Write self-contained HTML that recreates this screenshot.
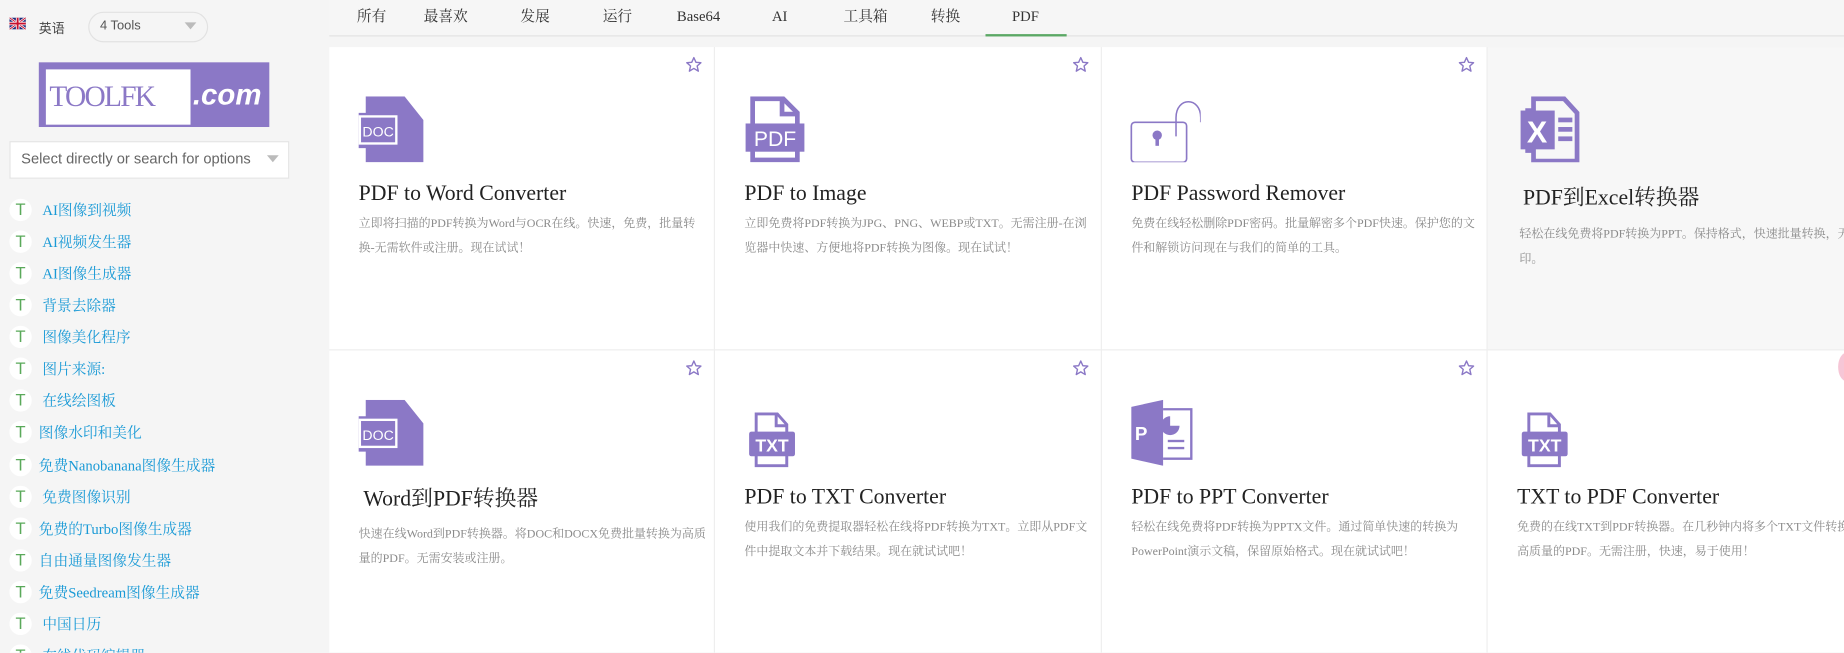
<!DOCTYPE html>
<html><head><meta charset="utf-8"><style>
html,body{margin:0;padding:0;width:1844px;height:653px;overflow:hidden;background:#f5f5f5}
#w{position:absolute;left:0;top:0;width:1568px;height:555px;transform:scale(1.17602);transform-origin:0 0;font-family:"Liberation Sans","Noto Sans CJK SC",sans-serif;background:#f5f5f5;overflow:hidden}
.a{position:absolute}
.li{position:absolute;left:8px;height:20px;font-size:12.5px;color:#1a9ad6;font-family:"Liberation Serif","Noto Serif CJK SC",serif;line-height:20px}
.li .t{position:absolute;left:0;top:0;width:19px;height:19px;border-radius:50%;background:#fff;color:#5aa95a;font-size:14px;text-align:center;line-height:19px;font-family:"Liberation Sans",sans-serif}
.li span.x{position:absolute;left:28px;white-space:nowrap}
.tab{position:absolute;top:4px;height:20px;line-height:20px;font-size:12.5px;color:#333;font-family:"Liberation Serif","Noto Serif CJK SC",serif;transform:translateX(-50%);white-space:nowrap}
.card{position:absolute;background:#fff;width:327px;height:257px}
.card .st{position:absolute;right:10px;top:8px}
.card .ic{position:absolute;left:24px;top:42px;width:60px;height:56px}
.card h3{position:absolute;left:25px;top:114px;margin:0;font-weight:normal;font-size:18.5px;line-height:22px;color:#222;font-family:"Liberation Serif","Noto Serif CJK SC",serif;white-space:nowrap}
.card p{position:absolute;left:25px;top:141px;margin:0;width:296px;font-size:10.2px;line-height:20.5px;color:#8a8a8a;font-family:"Liberation Serif","Noto Serif CJK SC",serif}
</style></head><body><div id="w">
<svg class="a" style="left:8px;top:15px" width="14" height="10" viewBox="0 0 14 10"><rect width="14" height="10" fill="#1d2b7a"/><path d="M0 0L14 10M14 0L0 10" stroke="#fff" stroke-width="2"/><path d="M0 0L14 10M14 0L0 10" stroke="#c8102e" stroke-width=".8"/><path d="M7 0V10M0 5H14" stroke="#fff" stroke-width="3"/><path d="M7 0V10M0 5H14" stroke="#c8102e" stroke-width="1.6"/></svg>
<div class="a" style="left:33px;top:16px;font-size:11px;color:#444">英语</div>
<div class="a" style="left:75px;top:10px;width:100px;height:24px;border:1px solid #e2e2e2;border-radius:13px;background:#f5f5f5"></div>
<div class="a" style="left:85px;top:16px;font-size:11px;color:#555">4 Tools</div>
<div class="a" style="left:157px;top:19px;width:0;height:0;border-left:5px solid transparent;border-right:5px solid transparent;border-top:6px solid #bbb"></div>
<div class="a" style="left:33px;top:53px;width:196px;height:55px;background:#8b78c6"></div>
<div class="a" style="left:39px;top:59px;width:123px;height:47px;background:#fff"></div>
<div class="a" style="left:42px;top:68px;font-family:'Liberation Serif',serif;font-size:25px;line-height:30px;color:#8b78c6;letter-spacing:-1.5px">TOOLFK</div>
<div class="a" style="left:164px;top:66px;font-family:'Liberation Sans',sans-serif;font-weight:bold;font-style:italic;font-size:25px;line-height:30px;color:#fff">.com</div>
<div class="a" style="left:8px;top:120px;width:236px;height:30px;background:#fff;border:1px solid #e4e4e4"></div>
<div class="a" style="left:18px;top:128px;font-size:12.5px;color:#666">Select directly or search for options</div>
<div class="a" style="left:227px;top:132px;width:0;height:0;border-left:5px solid transparent;border-right:5px solid transparent;border-top:6px solid #bbb"></div>
<div class="li" style="top:169px"><span class="t">T</span><span class="x">AI图像到视频</span></div>
<div class="li" style="top:196px"><span class="t">T</span><span class="x">AI视频发生器</span></div>
<div class="li" style="top:223px"><span class="t">T</span><span class="x">AI图像生成器</span></div>
<div class="li" style="top:250px"><span class="t">T</span><span class="x">背景去除器</span></div>
<div class="li" style="top:277px"><span class="t">T</span><span class="x">图像美化程序</span></div>
<div class="li" style="top:304px"><span class="t">T</span><span class="x">图片来源:</span></div>
<div class="li" style="top:331px"><span class="t">T</span><span class="x">在线绘图板</span></div>
<div class="li" style="top:358px"><span class="t">T</span><span class="x" style="left:25px">图像水印和美化</span></div>
<div class="li" style="top:386px"><span class="t">T</span><span class="x" style="left:25px">免费Nanobanana图像生成器</span></div>
<div class="li" style="top:413px"><span class="t">T</span><span class="x">免费图像识别</span></div>
<div class="li" style="top:440px"><span class="t">T</span><span class="x" style="left:25px">免费的Turbo图像生成器</span></div>
<div class="li" style="top:467px"><span class="t">T</span><span class="x" style="left:25px">自由通量图像发生器</span></div>
<div class="li" style="top:494px"><span class="t">T</span><span class="x" style="left:25px">免费Seedream图像生成器</span></div>
<div class="li" style="top:521px"><span class="t">T</span><span class="x">中国日历</span></div>
<div class="li" style="top:548px"><span class="t">T</span><span class="x">在线代码编辑器</span></div>
<div class="a" style="left:280px;top:0;width:1288px;height:30px;border-bottom:1px solid #e2e2e2;background:#f6f6f6"></div>
<div class="tab" style="left:316px">所有</div>
<div class="tab" style="left:379px">最喜欢</div>
<div class="tab" style="left:455px">发展</div>
<div class="tab" style="left:525px">运行</div>
<div class="tab" style="left:594px">Base64</div>
<div class="tab" style="left:663px">AI</div>
<div class="tab" style="left:736px">工具箱</div>
<div class="tab" style="left:804px">转换</div>
<div class="tab" style="left:872px">PDF</div>
<div class="a" style="left:838px;top:29px;width:69px;height:2px;background:#5ba865"></div>
<div class="a" style="left:280px;top:40px;width:1288px;height:515px;background:#eeeeee"></div>
<svg width="0" height="0" style="position:absolute"><defs><g id="star"><path d="M7 1L8.8 5 13 5.3 9.8 8.1 10.8 12.5 7 10.2 3.2 12.5 4.2 8.1 1 5.3 5.2 5Z" fill="none" stroke="#8b78c6" stroke-width="1.2" stroke-linejoin="round"/></g></defs></svg>

<div class="card" style="left:280px;top:40px"><svg class="st" width="14" height="14"><use href="#star"/></svg>
<svg class="ic" viewBox="0 0 60 56"><path d="M7 0H40L56 20V56H7V44H1V14H7Z" fill="#8b78c6"/><rect x="1" y="16" width="33" height="25" fill="#fff"/><rect x="3" y="18" width="29" height="21" fill="#8b78c6"/><text x="17.5" y="34" font-family="Liberation Sans" font-size="12" fill="#fff" text-anchor="middle">DOC</text></svg>
<h3>PDF to Word Converter</h3><p>立即将扫描的PDF转换为Word与OCR在线。快速，免费，批量转换-无需软件或注册。现在试试！</p></div>

<div class="card" style="left:608px;top:40px;width:328px"><svg class="st" width="14" height="14"><use href="#star"/></svg>
<svg class="ic" viewBox="0 0 60 56"><path d="M8 2H34L46 14V54H8Z" fill="none" stroke="#8b78c6" stroke-width="4"/><path d="M33 2V15H46" fill="none" stroke="#8b78c6" stroke-width="4"/><rect x="2" y="23" width="50" height="24" fill="#8b78c6"/><text x="27" y="42" font-family="Liberation Sans" font-size="18" fill="#fff" text-anchor="middle">PDF</text></svg>
<h3>PDF to Image</h3><p>立即免费将PDF转换为JPG、PNG、WEBP或TXT。无需注册-在浏览器中快速、方便地将PDF转换为图像。现在试试！</p></div>

<div class="card" style="left:937px;top:40px"><svg class="st" width="14" height="14"><use href="#star"/></svg>
<svg class="ic" viewBox="0 0 60 56"><path d="M39 34V18C39 0 60 0 60 18V22" fill="none" stroke="#8b78c6" stroke-width="1.3"/><rect x="1" y="22" width="47" height="34" rx="3" fill="none" stroke="#8b78c6" stroke-width="1.4"/><circle cx="23" cy="33" r="4" fill="#8b78c6"/><rect x="21.5" y="33" width="3" height="9" fill="#8b78c6"/></svg>
<h3>PDF Password Remover</h3><p>免费在线轻松删除PDF密码。批量解密多个PDF快速。保护您的文件和解锁访问现在与我们的简单的工具。</p></div>

<div class="card" style="left:1265px;top:40px;width:303px;background:#f7f7f7"><svg class="ic" style="top:42px;left:26px" viewBox="0 0 60 56"><path d="M13 2H39L50 14V55H13V46H8V12H13Z" fill="none" stroke="#8b78c6" stroke-width="4"/><rect x="2" y="12" width="29" height="33" fill="#8b78c6"/><text x="16" y="39" font-family="Liberation Sans" font-weight="bold" font-size="26" fill="#fff" text-anchor="middle">X</text><rect x="34" y="18" width="12" height="4" fill="#8b78c6"/><rect x="34" y="26" width="12" height="4" fill="#8b78c6"/><rect x="34" y="34" width="12" height="4" fill="#8b78c6"/></svg>
<h3 style="left:30px;top:118px">PDF到Excel转换器</h3><p style="left:27px;top:150px;width:300px">轻松在线免费将PDF转换为PPT。保持格式，快速批量转换，无水印。</p></div>

<div class="card" style="left:280px;top:298px;height:257px"><svg class="st" width="14" height="14"><use href="#star"/></svg>
<svg class="ic" viewBox="0 0 60 56"><path d="M7 0H40L56 20V56H7V44H1V14H7Z" fill="#8b78c6"/><rect x="1" y="16" width="33" height="25" fill="#fff"/><rect x="3" y="18" width="29" height="21" fill="#8b78c6"/><text x="17.5" y="34" font-family="Liberation Sans" font-size="12" fill="#fff" text-anchor="middle">DOC</text></svg>
<h3 style="left:29px;top:116px">Word到PDF转换器</h3><p style="top:147px">快速在线Word到PDF转换器。将DOC和DOCX免费批量转换为高质量的PDF。无需安装或注册。</p></div>

<div class="card" style="left:608px;top:298px;width:328px"><svg class="st" width="14" height="14"><use href="#star"/></svg>
<svg class="ic" style="top:52px;left:28px" viewBox="0 0 60 56"><path d="M7 2H25L33 11V46H7Z" fill="none" stroke="#8b78c6" stroke-width="2.5"/><path d="M24 2V12H33" fill="none" stroke="#8b78c6" stroke-width="2.5"/><rect x="1" y="17" width="39" height="21" rx="2" fill="#8b78c6"/><text x="20.5" y="34" font-family="Liberation Sans" font-weight="bold" font-size="15" fill="#fff" text-anchor="middle">TXT</text></svg>
<h3>PDF to TXT Converter</h3><p>使用我们的免费提取器轻松在线将PDF转换为TXT。立即从PDF文件中提取文本并下载结果。现在就试试吧！</p></div>

<div class="card" style="left:937px;top:298px"><svg class="st" width="14" height="14"><use href="#star"/></svg>
<svg class="ic" style="top:42px" viewBox="0 0 60 56"><path d="M1 6L28 0V56L1 50Z" fill="#8b78c6"/><text x="4" y="34" font-family="Liberation Sans" font-weight="bold" font-size="16" fill="#fff">P</text><path d="M28 8H52V50H28" fill="none" stroke="#8b78c6" stroke-width="2"/><path d="M34 14A8 8 0 1 0 42 22H34Z" fill="#8b78c6"/><rect x="32" y="34" width="14" height="2" fill="#8b78c6"/><rect x="32" y="40" width="14" height="2" fill="#8b78c6"/></svg>
<h3>PDF to PPT Converter</h3><p>轻松在线免费将PDF转换为PPTX文件。通过简单快速的转换为PowerPoint演示文稿，保留原始格式。现在就试试吧！</p></div>

<div class="card" style="left:1265px;top:298px;width:303px"><svg class="ic" style="top:52px;left:28px" viewBox="0 0 60 56"><path d="M7 2H25L33 11V46H7Z" fill="none" stroke="#8b78c6" stroke-width="2.5"/><path d="M24 2V12H33" fill="none" stroke="#8b78c6" stroke-width="2.5"/><rect x="1" y="17" width="39" height="21" rx="2" fill="#8b78c6"/><text x="20.5" y="34" font-family="Liberation Sans" font-weight="bold" font-size="15" fill="#fff" text-anchor="middle">TXT</text></svg>
<h3>TXT to PDF Converter</h3><p style="width:300px">免费的在线TXT到PDF转换器。在几秒钟内将多个TXT文件转换为高质量的PDF。无需注册，快速，易于使用！</p></div>
<div class="a" style="left:1563px;top:300px;width:14px;height:24px;border-radius:50%;background:#f6c6d6"></div>
</div></body></html>
